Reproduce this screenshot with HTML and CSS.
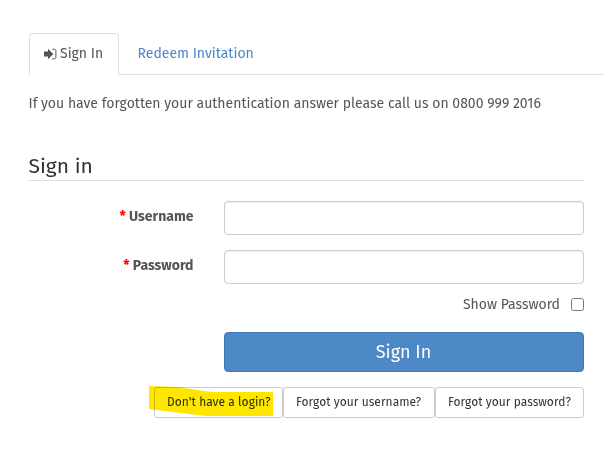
FILE: index.html
```html
<!DOCTYPE html>
<html lang="en">
<head>
<meta charset="utf-8">
<title>Sign In</title>
<link rel="stylesheet" href="styles.css">
</head>
<body>
<nav class="tabs">
  <a class="tab active"><svg class="icon" viewBox="0 0 13 12"><path d="M0 3.6h4V.8L9.3 6 4 11.2V8.4H0z" fill="currentColor"/><path d="M8.3 1.2h2c1 0 1.6.6 1.6 1.6v6.4c0 1-.6 1.6-1.6 1.6h-2" fill="none" stroke="currentColor" stroke-width="1"/></svg><span>Sign In</span></a>
  <a class="tab">Redeem Invitation</a>
</nav>
<main class="content">
  <p class="notice">If you have forgotten your authentication answer please call us on 0800 999 2016</p>
  <form>
    <h2 class="title">Sign in</h2>
    <div class="row"><label for="user"><span class="required">*</span> Username</label><input class="field" id="user" type="text"></div>
    <div class="row"><label for="pass"><span class="required">*</span> Password</label><input class="field" id="pass" type="password"></div>
    <label class="show"><span>Show Password</span><input class="check" type="checkbox"></label>
    <button class="submit" type="button">Sign In</button>
    <div class="links">
      <a class="link login">Don't have a login?<svg class="marker" viewBox="0 0 126 32"><path d="M0 0L28 1L63 6H124V30H57L0 23z" fill="#ffe600"/></svg></a>
      <a class="link forgot-user">Forgot your username?</a>
      <a class="link forgot-pass">Forgot your password?</a>
    </div>
  </form>
</main>
</body>
</html>
```

FILE: styles.css
```css
* { box-sizing: border-box; }
body {
  margin: 0;
  height: 453px;
  overflow: hidden;
  background: #fff;
  color: #555;
  font: 14px/20px "Fira Sans", "Noto Sans", sans-serif;
  white-space: nowrap;
}
.tabs {
  display: flex;
  height: 42px;
  margin: 33px 0 0 29px;
  border-bottom: 1px solid #ddd;
}
.tab {
  height: 41px;
  padding: 11px 0 0 18.5px;
  color: #4b87c7;
}
.tab.active {
  display: flex;
  width: 90px;
  height: 42px;
  padding: 10px 0 0 14px;
  border: 1px solid #ddd;
  border-bottom-color: #fff;
  border-radius: 4px 4px 0 0;
  background: #fff;
  color: #555;
}
.icon { width: 13px; height: 12px; margin: 4px 3px 0 0; flex: none; }
.content { margin: 19px 20px 0 28.5px; }
.notice { margin: 0; }
.title {
  height: 30px;
  margin: 37px 0 20px;
  border-bottom: 1px solid #e0e0e0;
  color: #333;
  font-size: 21px;
  line-height: 30px;
  font-weight: 400;
}
.row { display: flex; height: 34px; margin-bottom: 15px; }
.row label {
  width: 195.5px;
  padding: 6px 30.5px 0 0;
  text-align: right;
  font-weight: 700;
}
.required { color: #f00; }
.field {
  flex: 1;
  height: 34px;
  padding: 6px 12px;
  border: 1px solid #ccc;
  border-radius: 4px;
  box-shadow: inset 0 1px 1px rgba(0, 0, 0, .075);
  background: #fff;
}
.show { display: flex; justify-content: flex-end; height: 20px; margin-top: -5px; }
.show span { padding-top: 1px; }
.check { width: 13px; height: 13px; margin: 4px 0 0 11px; }
.submit {
  display: block;
  width: 360px;
  height: 40px;
  margin: 18px 0 15px 195.5px;
  padding: 0 1px 0 0;
  border: 1px solid #3e7abb;
  border-radius: 4px;
  background: #4d88c7;
  color: #fff;
  font: 18px/36px "Fira Sans", "Noto Sans", sans-serif;
}
.links { display: flex; justify-content: flex-end; }
.link {
  position: relative;
  height: 31px;
  padding: 5px 0 0 12px;
  border: 1px solid #ccc;
  border-radius: 3px;
  color: #333;
  font-size: 12px;
  line-height: 18px;
  letter-spacing: 0.04px;
}
.login { width: 129px; }
.forgot-user { width: 152px; }
.forgot-pass { width: 149px; }
.marker {
  position: absolute;
  left: -6px;
  top: -2px;
  width: 126px;
  height: 32px;
  mix-blend-mode: multiply;
}
```
